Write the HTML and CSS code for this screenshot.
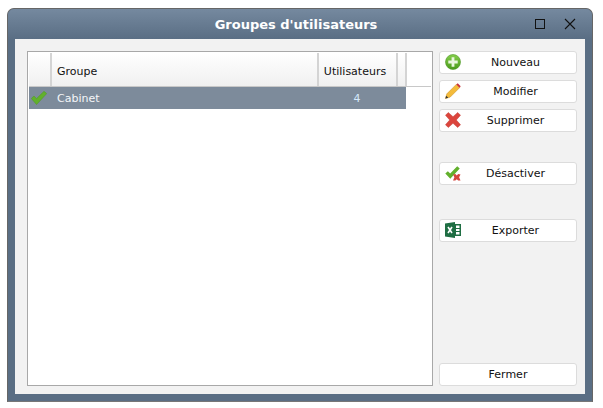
FILE: index.html
```html
<!DOCTYPE html>
<html lang="fr">
<head>
    <meta charset="UTF-8">
    <title>Groupes d'utilisateurs</title>
    <link rel="stylesheet" href="styles.css">
</head>
<body>

    <div class="window">
        <div class="titlebar">
            <span class="title">Groupes d'utilisateurs</span>
            <div class="controls">
                <svg width="12" height="12" viewBox="0 0 12 12"><rect x="1.5" y="1.5" width="9" height="9" fill="none" stroke="#111" stroke-width="1"/></svg>
                <svg width="12" height="12" viewBox="0 0 12 12"><path d="M1 1L11 11M11 1L1 11" fill="none" stroke="#111" stroke-width="1.1"/></svg>
            </div>
        </div>

        <div class="content">
            <div class="table-box">
                <div class="table-head">
                    <div class="th col-icon"></div>
                    <div class="th col-group">Groupe</div>
                    <div class="th col-users">Utilisateurs</div>
                    <div class="th col-end"></div>
                </div>
                <div class="table-row">
                    <div class="col-icon">
                        <svg width="16" height="14" viewBox="0 0 16 14"><path d="M0.3 7.5L3 5L5.5 7.6L13 0.3L15.7 2.6L5.6 13.6Z" fill="#62b02c" stroke="#4f9a20" stroke-width="0.5"/></svg>
                    </div>
                    <div class="td col-group">Cabinet</div>
                    <div class="td col-users num">4</div>
                </div>
            </div>

            <div class="actions">
                <div class="group">
                    <button class="btn">
                        <svg class="ico" width="16" height="16" viewBox="0 0 17 17"><defs><linearGradient id="plus-bg" x1="0" y1="0" x2="0" y2="1"><stop offset="0" stop-color="#86cf4c"/><stop offset="1" stop-color="#4a9a1c"/></linearGradient></defs><circle cx="8.5" cy="8.5" r="8" fill="url(#plus-bg)" stroke="#4a9420" stroke-width="0.6"/><path d="M8.5 3.5V13.5M3.5 8.5H13.5" stroke="#eaf6df" stroke-width="3"/></svg>
                        Nouveau
                    </button>
                    <button class="btn">
                        <svg class="ico" width="16" height="16" viewBox="0 0 17 17"><path d="M0.5 16.5L2 11.5L12 1.5L15.5 5L5.5 15Z" fill="#f4bb3a" stroke="#cc8e1e" stroke-width="0.6"/><path d="M0.5 16.5L1.2 13.5L3.5 15.8Z" fill="#333"/><path d="M12 1.5L13.5 0.3L16.7 3.5L15.5 5Z" fill="#c8303c"/></svg>
                        Modifier
                    </button>
                    <button class="btn">
                        <svg class="ico" width="16" height="16" viewBox="0 0 17 17"><path d="M3.5 0.5L8.5 5L13.5 0.5L16.5 3.5L12 8.5L16.5 13.5L13.5 16.5L8.5 12L3.5 16.5L0.5 13.5L5 8.5L0.5 3.5Z" fill="#db453d" stroke="#c0362f" stroke-width="0.5"/></svg>
                        Supprimer
                    </button>
                </div>
                <div class="group">
                    <button class="btn">
                        <svg class="ico ico-low" width="16" height="15" viewBox="0 0 17 16"><path d="M0.3 8L3 5.5L5.5 8L13 0.3L15.7 2.6L5.6 13.5Z" fill="#62b02c"/><path d="M8.5 9L11 8.5L12.5 10L14 8.5L16.5 9L15 12L16.5 15.5L14 15.5L12.5 14L11 15.5L8.5 15.5L10 12Z" fill="#d4443c"/></svg>
                        Désactiver
                    </button>
                </div>
                <div class="group">
                    <button class="btn">
                        <svg class="ico" width="16" height="16" viewBox="0 0 16 16"><path d="M0 1.5L10 0V16L0 14.5Z" fill="#1f6e43"/><path d="M3 5L7 11M7 5L3 11" stroke="#fff" stroke-width="1.6"/><path d="M10 2H16V14H10Z" fill="#1f6e43"/><path d="M11 3.5H14.5V6H11ZM11 7H14.5V9H11ZM11 10H14.5V12.5H11Z" fill="#fff"/></svg>
                        Exporter
                    </button>
                </div>
                <button class="btn close">Fermer</button>
            </div>
        </div>
    </div>

</body>
</html>
```

FILE: styles.css
```css
html, body {
    margin: 0;
    padding: 0;
    height: 408px;
    background: white;
    overflow: hidden;
}
body {
    font-family: "DejaVu Sans", sans-serif;
    font-size: 11px;
    padding: 8px 10px 6px 7px;
    box-sizing: border-box;
}
.window {
    height: 100%;
    box-sizing: border-box;
    display: flex;
    flex-direction: column;
    background: #5a6e84;
    border: 1px solid #666;
    border-bottom-color: #777;
    border-radius: 7px 7px 0 0;
    padding: 0 7px 7px 7px;
}
.titlebar {
    flex: 0 0 30px;
    margin: 0 -7px;
    padding: 0 15px 0 7px;
    position: relative;
    display: flex;
    align-items: center;
    justify-content: center;
    background: linear-gradient(#75899f, #5a6e84);
    border-radius: 6px 6px 0 0;
}
.title {
    color: white;
    font-weight: bold;
    font-size: 13px;
}
.controls {
    position: absolute;
    right: 16px;
    top: 9px;
    display: flex;
    gap: 18px;
}
.content {
    flex: 1;
    display: flex;
    background: #f2f2f2;
    padding: 12px 8px 8px 12px;
}
.table-box {
    width: 406px;
    box-sizing: border-box;
    background: white;
    border: 1px solid #a8a8a8;
    padding: 1px;
}
.table-head {
    display: flex;
    height: 34px;
    box-sizing: border-box;
    border-bottom: 1px solid #c8c8c8;
}
.th {
    box-sizing: border-box;
    background: linear-gradient(#ffffff, #f0f0f0);
    border-right: 2px solid #d4d4d4;
    display: flex;
    align-items: center;
    color: #111;
    padding-top: 4px;
}
.table-row {
    display: flex;
    height: 22px;
    align-items: center;
    background: #7d8b9b;
    width: 377px;
    color: #f4f6f8;
}
.col-icon {
    width: 23px;
    flex: none;
    display: flex;
    align-items: center;
    box-sizing: border-box;
}
.table-row .col-icon {
    padding-left: 2px;
}
.col-group {
    width: 267px;
    flex: none;
    padding-left: 5px;
    box-sizing: border-box;
}
.col-users {
    width: 79px;
    flex: none;
    justify-content: center;
    box-sizing: border-box;
    padding-right: 3px;
}
.th.col-users {
    padding-right: 5px;
}
.col-end {
    width: 9px;
    flex: none;
}
.num {
    text-align: center;
    color: #d4e8fa;
}
.actions {
    margin-left: 6px;
    width: 138px;
    display: flex;
    flex-direction: column;
}
.group {
    display: flex;
    flex-direction: column;
    gap: 6px;
    margin-bottom: 30px;
}
.group + .group {
    margin-bottom: 34px;
}
.btn {
    position: relative;
    width: 138px;
    height: 23px;
    padding: 0 0 0 15px;
    background: white;
    border: 1px solid #dcdcdc;
    border-radius: 3px;
    font-family: inherit;
    font-size: 11px;
    color: #111;
    text-align: center;
}
.ico {
    position: absolute;
    left: 5px;
    top: 2px;
}
.ico-low {
    top: 3px;
}
.close {
    margin-top: auto;
    padding-left: 0;
}
```
